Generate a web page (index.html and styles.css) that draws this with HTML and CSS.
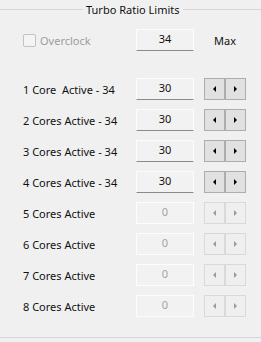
FILE: index.html
```html
<!DOCTYPE html>
<html>
<head>
    <title>Turbo Ratio Limits</title>
    <link rel="stylesheet" href="styles.css">
</head>
<body>
    <div class="group">
        <div class="group-title">
            <span class="rule rule-left"></span>
            <span class="title">Turbo Ratio Limits</span>
            <span class="rule"></span>
        </div>
        <div class="grid top-row">
            <label class="check disabled"><span class="box"></span>Overclock</label>
            <div class="field">34</div>
            <div class="max">Max</div>
        </div>
        <div class="grid rows">
            <div class="label">1 Core&nbsp; Active - 34</div>
            <div class="field">30</div>
            <div class="spin"><span class="btn"><i class="arrow left"></i></span><span class="btn"><i class="arrow right"></i></span></div>

            <div class="label">2 Cores Active - 34</div>
            <div class="field">30</div>
            <div class="spin"><span class="btn"><i class="arrow left"></i></span><span class="btn"><i class="arrow right"></i></span></div>

            <div class="label">3 Cores Active - 34</div>
            <div class="field">30</div>
            <div class="spin"><span class="btn"><i class="arrow left"></i></span><span class="btn"><i class="arrow right"></i></span></div>

            <div class="label">4 Cores Active - 34</div>
            <div class="field">30</div>
            <div class="spin"><span class="btn"><i class="arrow left"></i></span><span class="btn"><i class="arrow right"></i></span></div>

            <div class="label">5 Cores Active</div>
            <div class="field off">0</div>
            <div class="spin off"><span class="btn"><i class="arrow left"></i></span><span class="btn"><i class="arrow right"></i></span></div>

            <div class="label">6 Cores Active</div>
            <div class="field off">0</div>
            <div class="spin off"><span class="btn"><i class="arrow left"></i></span><span class="btn"><i class="arrow right"></i></span></div>

            <div class="label">7 Cores Active</div>
            <div class="field off">0</div>
            <div class="spin off"><span class="btn"><i class="arrow left"></i></span><span class="btn"><i class="arrow right"></i></span></div>

            <div class="label">8 Cores Active</div>
            <div class="field off">0</div>
            <div class="spin off"><span class="btn"><i class="arrow left"></i></span><span class="btn"><i class="arrow right"></i></span></div>
        </div>
    </div>
</body>
</html>
```

FILE: styles.css
```css
body {
    margin: 0;
    background-color: #f0f0f0;
    font-family: "Noto Sans", "Liberation Sans", sans-serif;
    font-size: 11px;
    color: #111;
}
.group {
    border-bottom: 1px solid #d5d5d5;
    padding-bottom: 20px;
}
.group-title {
    display: flex;
    align-items: center;
    height: 19px;
}
.rule {
    flex: 1;
    height: 1px;
    background-color: #d5d5d5;
}
.rule-left {
    flex: 0 0 83px;
}
.title {
    padding: 0 3px;
    line-height: 19px;
    color: #111;
}
.grid {
    display: grid;
    grid-template-columns: 103px 58px 42px;
    column-gap: 10px;
    padding-left: 23px;
    align-items: center;
}
.top-row {
    margin-top: 10px;
}
.rows {
    margin-top: 27px;
    row-gap: 9px;
}
.check {
    display: flex;
    align-items: center;
    gap: 4px;
    color: #9d9d9d;
}
.box {
    width: 11px;
    height: 11px;
    border: 1px solid #c2c2c2;
    border-radius: 2px;
    background-color: #f4f4f4;
}
.max {
    padding-left: 10px;
}
.field {
    box-sizing: border-box;
    height: 22px;
    border: 1px solid #fdfdfd;
    border-bottom-color: #8a8a8a;
    background-color: #f2f2f2;
    text-align: center;
    line-height: 17px;
}
.field.off {
    border-bottom-color: #fdfdfd;
    color: #a3a3a3;
}
.spin {
    display: flex;
    height: 22px;
}
.btn {
    box-sizing: border-box;
    flex: 1;
    display: flex;
    align-items: center;
    justify-content: center;
    border: 1px solid #adadad;
    background-color: #e1e1e1;
}
.spin.off .btn {
    border-color: #d9d9d9;
    background-color: #efefef;
}
.arrow {
    width: 0;
    height: 0;
    border-top: 3px solid transparent;
    border-bottom: 3px solid transparent;
}
.arrow.left {
    border-right: 3px solid #000;
}
.arrow.right {
    border-left: 3px solid #000;
}
.spin.off .arrow.left {
    border-right-color: #9a9a9a;
}
.spin.off .arrow.right {
    border-left-color: #9a9a9a;
}
```
